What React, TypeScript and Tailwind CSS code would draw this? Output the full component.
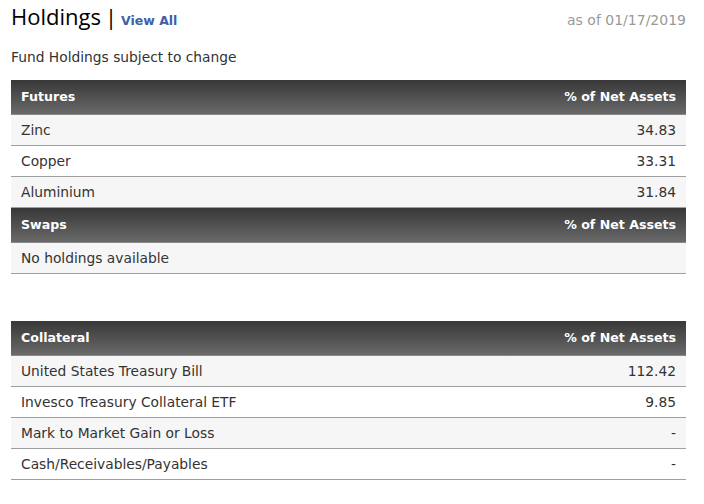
import React from 'react';

type Row = { name: string; value: string };

const futures: Row[] = [
  { name: 'Zinc', value: '34.83' },
  { name: 'Copper', value: '33.31' },
  { name: 'Aluminium', value: '31.84' },
];

const collateral: Row[] = [
  { name: 'United States Treasury Bill', value: '112.42' },
  { name: 'Invesco Treasury Collateral ETF', value: '9.85' },
  { name: 'Mark to Market Gain or Loss', value: '-' },
  { name: 'Cash/Receivables/Payables', value: '-' },
];

const HeaderRow = ({ label }: { label: string }) => (
  <div className="flex h-[35px] items-center justify-between border-b border-[#8a8a8a] bg-gradient-to-b from-[#383838] to-[#6a6a6a] px-[10px] pt-[2px] text-[12.6px] font-bold text-white">
    <span>{label}</span>
    <span>% of Net Assets</span>
  </div>
);

const DataRow = ({ row, index }: { row: Row; index: number }) => (
  <div
    className={`flex h-[31px] items-center justify-between border-b border-[#a0a0a0] px-[10px] pt-[2px] text-[13.8px] text-[#333] ${
      index % 2 === 0 ? 'bg-[#f6f6f6]' : 'bg-white'
    }`}
  >
    <span>{row.name}</span>
    <span>{row.value}</span>
  </div>
);

export default function App() {
  return (
    <div className="h-[504px] w-[704px] bg-white pl-[11px] pr-[18px] pt-[1px] font-['DejaVu_Sans',Verdana,sans-serif]">
      {/* Title */}
      <div className="flex items-end justify-between">
        <div className="flex items-baseline">
          <h2 className="font-['Open_Sans',sans-serif] text-[22px] leading-[30px] text-black">Holdings</h2>
          <span className="ml-[4px] mr-[4px] font-['Open_Sans',sans-serif] text-[22px] leading-[30px] text-black">|</span>
          <a className="text-[12.5px] font-bold text-[#3c61a9]">View All</a>
        </div>
        <span className="text-[14px] text-[#999]">as of 01/17/2019</span>
      </div>

      <p className="mt-[16px] text-[13.8px] text-[#333]">Fund Holdings subject to change</p>

      <div className="mt-[12px]">
        <HeaderRow label="Futures" />
        {futures.map((r, i) => (
          <DataRow key={r.name} row={r} index={i} />
        ))}
        <HeaderRow label="Swaps" />
        <div className="flex h-[31px] items-center border-b border-[#a0a0a0] bg-[#f6f6f6] px-[10px] pt-[2px] text-[13.8px] text-[#333]">
          No holdings available
        </div>
      </div>

      <div className="mt-[47px]">
        <HeaderRow label="Collateral" />
        {collateral.map((r, i) => (
          <DataRow key={r.name} row={r} index={i} />
        ))}
      </div>
    </div>
  );
}
